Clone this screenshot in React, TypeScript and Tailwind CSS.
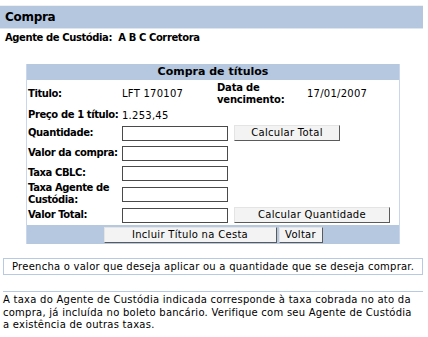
import React from 'react';

const inputCls = 'block h-[15px] w-[106px] border border-[#4a4a4a] bg-white';
const btnCls =
  'h-[16px] border border-t-[#e4e4e4] border-l-[#e4e4e4] border-r-[#5a5a5a] border-b-[#5a5a5a] bg-[#f3f3f3] text-[10px] leading-[14px] text-black tracking-[0.3px]';

function Row({ label, h, children }: { label: React.ReactNode; h: string; children?: React.ReactNode }) {
  return (
    <div className={`flex items-center ${h}`}>
      <div className="w-[95px] shrink-0 whitespace-nowrap pl-[1px] font-bold leading-[12px] tracking-[-0.4px]">{label}</div>
      {children}
    </div>
  );
}

export default function App() {
  return (
    <div className="h-[337px] w-[428px] overflow-hidden bg-white pt-[5px] font-['DejaVu_Sans',Verdana,sans-serif] text-[10px] tracking-[0.25px] text-black">
      <div className="mr-[5px] border-t border-[#f0f0f0]" />
      <div className="mr-[5px] flex h-[23px] items-center border-b border-[#dde5f0] bg-[#b5c7df] pl-[5px] text-[12px] font-bold tracking-[-0.3px]">
        Compra
      </div>
      <div className="pl-[5px] pt-[2px] font-bold leading-[14px] tracking-[-0.4px] whitespace-pre">
        Agente de Custódia:  A B C Corretora
      </div>

      <div className="ml-[26px] mt-[19px] w-[374px] border-x border-[#c9d7ea]">
        <div className="h-[16px] bg-[#b5c8e0] text-center text-[11px] font-bold leading-[16px] tracking-normal">
          Compra de títulos
        </div>
        <div className="flex h-[27px] items-center">
          <div className="w-[95px] shrink-0 pl-[1px] font-bold tracking-[-0.4px]">Titulo:</div>
          <div className="w-[95px] shrink-0">LFT 170107</div>
          <div className="w-[90px] shrink-0 font-bold leading-[12px] tracking-[-0.2px]">
            Data de
            <br />
            vencimento:
          </div>
          <div>17/01/2007</div>
        </div>
        <Row label="Preço de 1 título:" h="h-[16px]">
          <div>1.253,45</div>
        </Row>
        <Row label="Quantidade:" h="h-[20px]">
          <input className={inputCls} />
          <button className={`${btnCls} ml-[6px] w-[106px]`}>Calcular Total</button>
        </Row>
        <Row label="Valor da compra:" h="h-[20px]">
          <input className={inputCls} />
        </Row>
        <Row label="Taxa CBLC:" h="h-[20px]">
          <input className={inputCls} />
        </Row>
        <Row
          label={
            <>
              Taxa Agente de
              <br />
              Custódia:
            </>
          }
          h="h-[22px]"
        >
          <input className={inputCls} />
        </Row>
        <Row label="Valor Total:" h="h-[20px]">
          <input className={inputCls} />
          <button className={`${btnCls} ml-[6px] w-[156px]`}>Calcular Quantidade</button>
        </Row>
        <div className="flex h-[19px] items-center justify-center gap-[2px] bg-[#b5c8e0]">
          <button className={`${btnCls} w-[173px]`}>Incluir Título na Cesta</button>
          <button className={`${btnCls} w-[44px]`}>Voltar</button>
        </div>
      </div>

      <div className="ml-[3px] mr-[5px] mt-[14px] h-[17px] border border-[#b8cae2] pl-[8px] leading-[15px]">
        Preencha o valor que deseja aplicar ou a quantidade que se deseja comprar.
      </div>

      <div className="ml-[3px] mr-[5px] mt-[16px] border-y border-[#b8cae2] pb-[6px] pt-[2px] leading-[12.5px]">
        A taxa do Agente de Custódia indicada corresponde à taxa cobrada no ato da
        <br />
        compra, já incluída no boleto bancário. Verifique com seu Agente de Custódia
        <br />a existência de outras taxas.
      </div>
    </div>
  );
}
